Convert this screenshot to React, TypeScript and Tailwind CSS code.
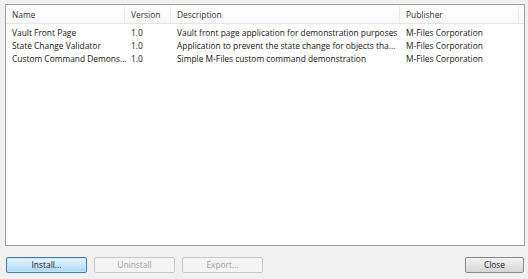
const rows = [
  { name: "Vault Front Page", version: "1.0", description: "Vault front page application for demonstration purposes", publisher: "M-Files Corporation" },
  { name: "State Change Validator", version: "1.0", description: "Application to prevent the state change for objects tha...", publisher: "M-Files Corporation" },
  { name: "Custom Command Demons...", version: "1.0", description: "Simple M-Files custom command demonstration", publisher: "M-Files Corporation" },
];

const HeaderCell = ({ label, className }: { label: string; className: string }) => (
  <div className={`flex items-center pl-[6px] pt-[2px] border-r border-[#ececec] ${className}`}>{label}</div>
);

const DialogButton = ({ label, primary, disabled }: { label: string; primary?: boolean; disabled?: boolean }) => (
  <button
    className={`w-full h-[16px] rounded-[2px] border text-center leading-none ${
      primary
        ? "border-[#3c7fb1] bg-gradient-to-b from-[#eaf6fd] to-[#a7d9f5] text-[#1a1a1a] shadow-[inset_0_0_0_1px_#c4e5f6]"
        : disabled
        ? "border-[#c8c8c8] bg-[#f4f4f4] text-[#a0a0a0]"
        : "border-[#8a8a8a] bg-gradient-to-b from-[#f4f4f4] to-[#d6d6d6] text-[#1a1a1a]"
    }`}
  >
    {label}
  </button>
);

export default function App() {
  return (
    <div
      className="w-[528px] h-[279px] bg-[#f0f0f0] flex flex-col text-[8.4px] text-[#141414]"
      style={{ fontFamily: '"Open Sans", "Liberation Sans", sans-serif' }}
    >
      {/* List view */}
      <div className="ml-[5px] mt-[4px] w-[520px] h-[242px] border border-[#a0a0a0] bg-white flex flex-col">
        <div className="flex h-[19px] border-b border-[#e5e5e5] bg-gradient-to-b from-white to-[#f7f8f9] text-[#333]">
          <HeaderCell label="Name" className="w-[119px]" />
          <HeaderCell label="Version" className="w-[46px]" />
          <HeaderCell label="Description" className="w-[229px]" />
          <HeaderCell label="Publisher" className="w-[119px]" />
        </div>
        <div className="flex flex-col pt-[3px]">
          {rows.map((r) => (
            <div key={r.name} className="flex h-[13px] items-center">
              <div className="w-[119px] pl-[6px] whitespace-nowrap">{r.name}</div>
              <div className="w-[46px] pl-[6px]">{r.version}</div>
              <div className="w-[229px] pl-[6px] whitespace-nowrap">{r.description}</div>
              <div className="w-[119px] pl-[6px] whitespace-nowrap">{r.publisher}</div>
            </div>
          ))}
        </div>
      </div>

      {/* Buttons */}
      <div className="flex items-center mt-[11px] pl-[6px] pr-[4px]">
        <div className="flex gap-[7px]">
          <div className="w-[81px] flex"><DialogButton label="Install..." primary /></div>
          <div className="w-[81px] flex"><DialogButton label="Uninstall" disabled /></div>
          <div className="w-[81px] flex"><DialogButton label="Export..." disabled /></div>
        </div>
        <div className="ml-auto w-[59px] flex"><DialogButton label="Close" /></div>
      </div>
    </div>
  );
}
